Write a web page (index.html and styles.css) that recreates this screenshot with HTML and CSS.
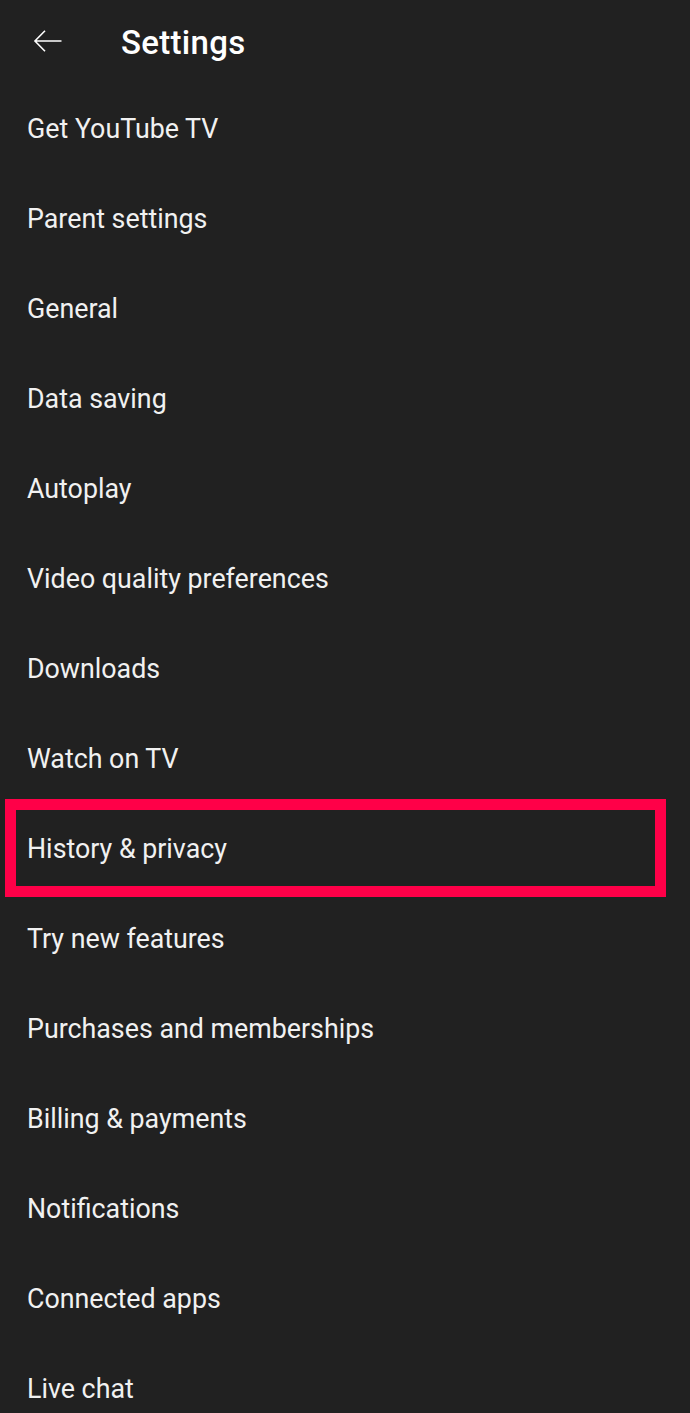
FILE: index.html
```html
<!DOCTYPE html>
<html lang="en">
<head>
    <meta charset="UTF-8">
    <meta name="viewport" content="width=device-width, initial-scale=1.0">
    <title>Settings</title>
    <link rel="stylesheet" href="styles.css">
</head>
<body>
    <div class="app">
        <div class="header">
            <button class="back-btn" aria-label="Back">
                <svg width="36" height="36" viewBox="0 0 24 24" fill="none" stroke="#fff" stroke-width="1.05">
                    <path d="M21 12H3.5M10 5.2L3.3 12l6.7 6.8"/>
                </svg>
            </button>
            <h1>Settings</h1>
        </div>

        <ul class="settings-list">
            <li class="item">Get YouTube TV</li>
            <li class="item">Parent settings</li>
            <li class="item">General</li>
            <li class="item">Data saving</li>
            <li class="item">Autoplay</li>
            <li class="item">Video quality preferences</li>
            <li class="item">Downloads</li>
            <li class="item">Watch on TV</li>
            <li class="item highlighted">History &amp; privacy</li>
            <li class="item">Try new features</li>
            <li class="item">Purchases and memberships</li>
            <li class="item">Billing &amp; payments</li>
            <li class="item">Notifications</li>
            <li class="item">Connected apps</li>
            <li class="item">Live chat</li>
        </ul>
    </div>
</body>
</html>
```

FILE: styles.css
```css
*, *::before, *::after {
    margin: 0;
    padding: 0;
    box-sizing: border-box;
}

html, body {
    background: #212121;
}

body {
    font-family: Roboto, "Noto Sans", sans-serif;
    color: #f1f1f1;
    height: 1413px;
    overflow: hidden;
}

.header {
    height: 83px;
    display: flex;
    align-items: center;
    padding-left: 27px;
    padding-top: 2px;
}

.back-btn {
    background: none;
    border: none;
    width: 42px;
    height: 42px;
    display: flex;
    align-items: center;
    justify-content: center;
    margin-top: -4px;
}

.header h1 {
    font-size: 33px;
    font-weight: 500;
    color: #fff;
    margin-left: 52px;
    letter-spacing: 0.3px;
}

.settings-list {
    list-style: none;
}

.item {
    height: 90px;
    display: flex;
    align-items: center;
    padding-left: 27px;
    padding-top: 2px;
    font-size: 26.8px;
    position: relative;
}

.item.highlighted::after {
    content: "";
    position: absolute;
    top: -4px;
    left: 5px;
    width: 661px;
    height: 98px;
    border: 11px solid #ff0048;
}
```
